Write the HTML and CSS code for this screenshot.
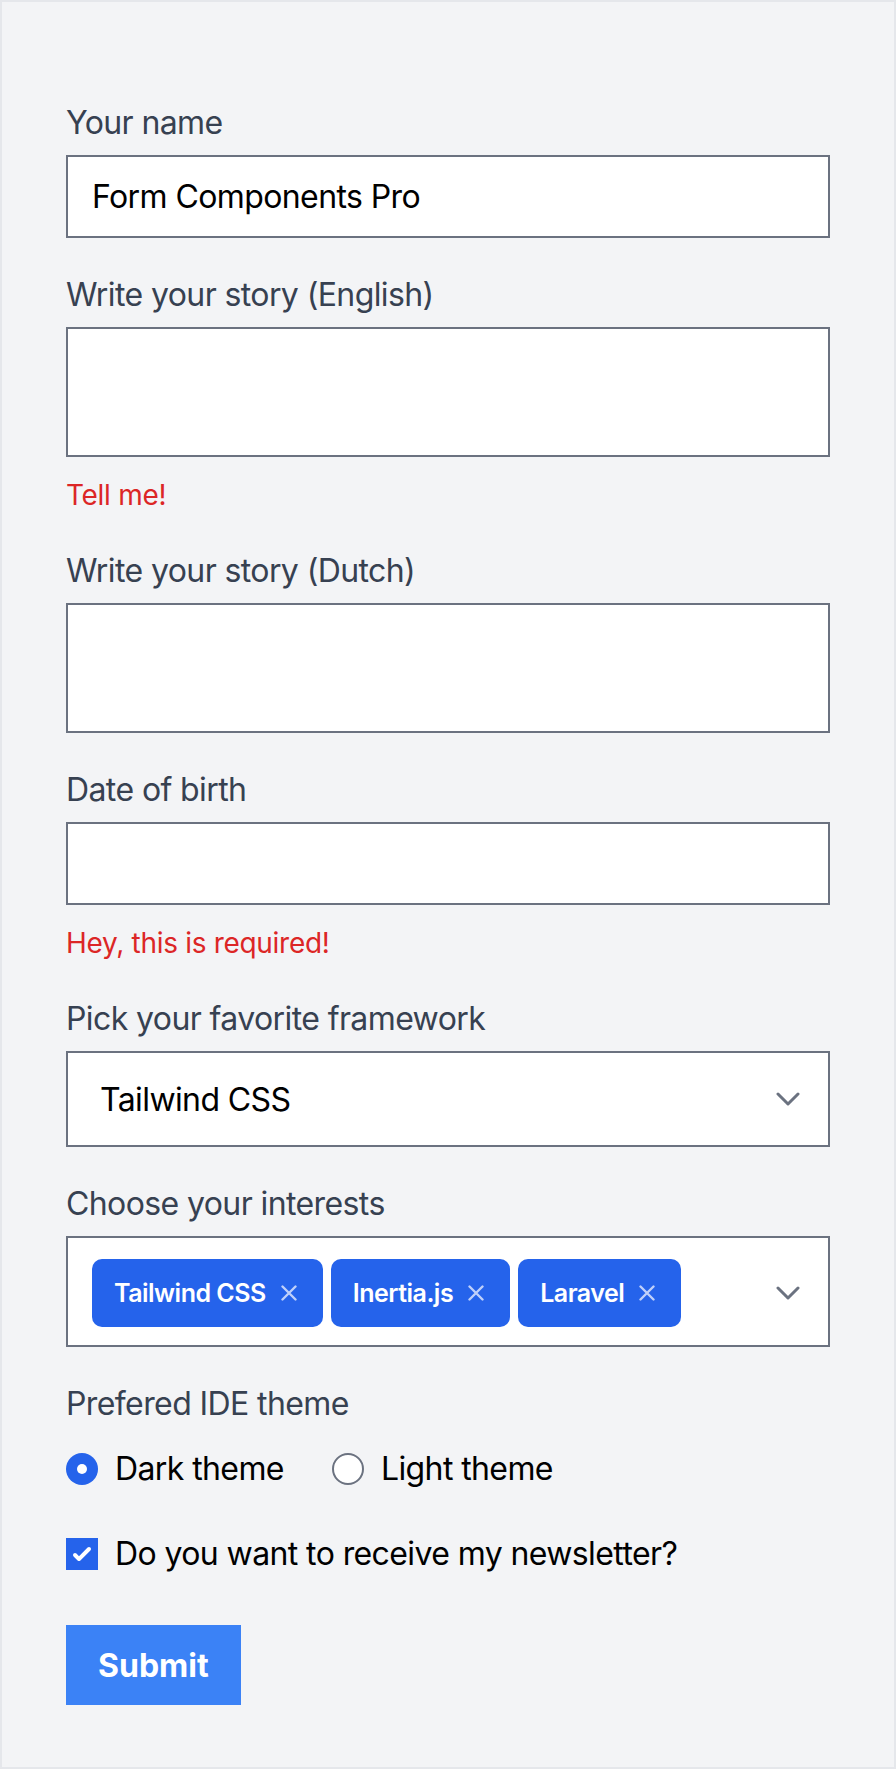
FILE: index.html
```html
<!DOCTYPE html>
<html lang="en">
<head>
<meta charset="utf-8">
<title>Form</title>
<link rel="stylesheet" href="styles.css">
</head>
<body>
<div class="page">
  <form class="form">
    <div class="field">
      <label class="label" for="name">Your name</label>
      <input class="input" id="name" type="text" value="Form Components Pro">
    </div>

    <div class="field">
      <label class="label" for="story-en">Write your story (English)</label>
      <textarea class="input textarea" id="story-en"></textarea>
      <p class="error">Tell me!</p>
    </div>

    <div class="field">
      <label class="label" for="story-nl">Write your story (Dutch)</label>
      <textarea class="input textarea" id="story-nl"></textarea>
    </div>

    <div class="field">
      <label class="label" for="dob">Date of birth</label>
      <input class="input" id="dob" type="text" value="">
      <p class="error">Hey, this is required!</p>
    </div>

    <div class="field">
      <span class="label">Pick your favorite framework</span>
      <div class="select">
        <span class="select-value">Tailwind CSS</span>
        <svg class="chevron" width="24" height="14" viewBox="0 0 24 14" aria-hidden="true"><polyline points="2,2 12,12 22,2" fill="none" stroke="#6b7280" stroke-width="3" stroke-linecap="round" stroke-linejoin="round"/></svg>
      </div>
    </div>

    <div class="field">
      <span class="label">Choose your interests</span>
      <div class="select multi">
        <div class="tags">
          <span class="tag">Tailwind CSS<svg class="tag-x" width="16" height="16" viewBox="0 0 16 16" aria-hidden="true"><path d="M1.5 1.5L14.5 14.5M14.5 1.5L1.5 14.5" stroke="currentColor" stroke-width="2.4" stroke-linecap="round"/></svg></span>
          <span class="tag">Inertia.js<svg class="tag-x" width="16" height="16" viewBox="0 0 16 16" aria-hidden="true"><path d="M1.5 1.5L14.5 14.5M14.5 1.5L1.5 14.5" stroke="currentColor" stroke-width="2.4" stroke-linecap="round"/></svg></span>
          <span class="tag">Laravel<svg class="tag-x" width="16" height="16" viewBox="0 0 16 16" aria-hidden="true"><path d="M1.5 1.5L14.5 14.5M14.5 1.5L1.5 14.5" stroke="currentColor" stroke-width="2.4" stroke-linecap="round"/></svg></span>
        </div>
        <svg class="chevron" width="24" height="14" viewBox="0 0 24 14" aria-hidden="true"><polyline points="2,2 12,12 22,2" fill="none" stroke="#6b7280" stroke-width="3" stroke-linecap="round" stroke-linejoin="round"/></svg>
      </div>
    </div>

    <div class="field field-radios">
      <span class="label">Prefered IDE theme</span>
      <div class="radios">
        <span class="choice"><span class="radio checked"></span>Dark theme</span>
        <span class="choice"><span class="radio"></span>Light theme</span>
      </div>
    </div>

    <div class="checkbox-row">
      <span class="checkbox"><svg width="32" height="32" viewBox="0 0 16 16" aria-hidden="true"><path fill="#fff" d="M12.207 4.793a1 1 0 010 1.414l-5 5a1 1 0 01-1.414 0l-2-2a1 1 0 011.414-1.414L6.5 9.086l4.293-4.293a1 1 0 011.414 0z"/></svg></span>
      <span>Do you want to receive my newsletter?</span>
    </div>

    <button class="submit" type="button">Submit</button>
  </form>
</div>
</body>
</html>
```

FILE: styles.css
```css
html, body {
  margin: 0;
  padding: 0;
}

body {
  font-family: Inter, "Noto Sans", sans-serif;
  color: #000;
  letter-spacing: -0.6px;
}

.page {
  box-sizing: border-box;
  height: 1769px;
  border: 2px solid #e5e7eb;
  background: #f3f4f6;
  padding: 97px 64px 0;
}

.form {
  margin: 0;
}

.field + .field {
  margin-top: 33px;
}

.label {
  display: block;
  font-size: 32px;
  line-height: 48px;
  color: #374151;
  margin-bottom: 8px;
}

.input {
  display: block;
  box-sizing: border-box;
  width: 100%;
  height: 83px;
  margin: 0;
  border: 2px solid #6b7280;
  border-radius: 0;
  background: #fff;
  padding: 0 24px;
  font-family: inherit;
  font-size: 32px;
  letter-spacing: -0.6px;
  color: #000;
  outline: none;
}

.textarea {
  height: 130px;
  padding: 16px 24px;
  resize: none;
}

.error {
  margin: 19px 0 0;
  font-size: 28px;
  line-height: 38px;
  letter-spacing: -0.3px;
  color: #dc2626;
}

.select {
  box-sizing: border-box;
  height: 96px;
  border: 2px solid #6b7280;
  background: #fff;
  display: flex;
  align-items: center;
  justify-content: space-between;
  padding: 0 28px 0 32px;
  font-size: 32px;
}

.multi {
  height: 111px;
  padding-left: 24px;
  padding-top: 2px;
}

.chevron {
  display: block;
  flex: none;
}

.tags {
  display: flex;
  gap: 8px;
}

.tag {
  display: inline-flex;
  align-items: center;
  height: 68px;
  box-sizing: border-box;
  padding: 0 26px 0 22px;
  border-radius: 10px;
  background: #2563eb;
  color: #fff;
  font-size: 25px;
  font-weight: 600;
  letter-spacing: -0.5px;
}

.tag-x {
  margin-left: 15px;
  color: #bfd0fa;
}

.field-radios {
  margin-top: 35px;
}

.radios {
  display: flex;
  gap: 48px;
  margin-top: 17px;
}

.choice,
.checkbox-row {
  display: flex;
  align-items: center;
  gap: 17px;
  font-size: 32px;
  line-height: 48px;
  color: #000;
}

.radio {
  box-sizing: border-box;
  width: 32px;
  height: 32px;
  border-radius: 50%;
  border: 2px solid #6b7280;
  background: #fff;
  display: flex;
  align-items: center;
  justify-content: center;
}

.radio.checked {
  border: none;
  background: #2563eb;
}

.radio.checked::after {
  content: "";
  width: 10px;
  height: 10px;
  border-radius: 50%;
  background: #fff;
}

.checkbox-row {
  margin-top: 37px;
}

.checkbox {
  width: 32px;
  height: 32px;
  background: #2563eb;
  display: block;
}

.checkbox svg {
  display: block;
}

.submit {
  display: block;
  margin-top: 47px;
  height: 80px;
  padding: 0 32px;
  border: none;
  border-radius: 0;
  background: #3b82f6;
  color: #fff;
  font-family: inherit;
  font-size: 32px;
  font-weight: 700;
  letter-spacing: 0;
}
```
